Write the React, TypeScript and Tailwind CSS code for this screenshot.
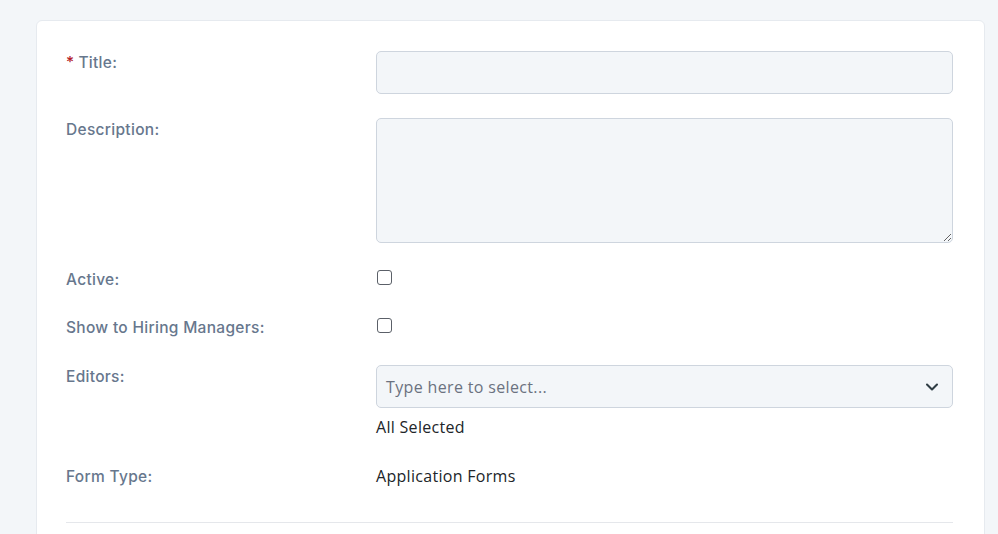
import { ChevronDown } from "lucide-react";

const font = { fontFamily: '"Open Sans", "Liberation Sans", sans-serif' };
const labelFont = { fontFamily: 'Inter, "Open Sans", sans-serif' };

function Label({ children, required }: { children: React.ReactNode; required?: boolean }) {
  return (
    <div className="w-[310px] shrink-0 pt-[1px] text-[15.5px] leading-[21px] font-medium tracking-[0.3px] text-[#67778d]" style={labelFont}>
      {required && <span className="text-[#b4232b] mr-1">*</span>}
      {children}
    </div>
  );
}

function Checkbox() {
  return <div className="ml-[1px] mt-[2px] w-[15px] h-[15px] rounded-[3px] border-[1.5px] border-[#5b6068] bg-white" />;
}

export default function App() {
  return (
    <div className="min-h-screen bg-[#f3f6f9] pt-5 pl-9 pr-[13px]" style={font}>
      <div className="bg-white border border-[#e6eaef] rounded-t-md pt-[30px] pl-[29px] pr-[31px] pb-10 min-h-[600px]">
        {/* Title */}
        <div className="flex mb-6">
          <Label required>Title:</Label>
          <input className="flex-1 h-[43px] bg-[#f3f6f9] border border-[#ced5de] rounded-[5px] px-3 outline-none" />
        </div>

        {/* Description */}
        <div className="flex mb-[25px]">
          <Label>Description:</Label>
          <textarea className="flex-1 h-[125px] bg-[#f3f6f9] border border-[#ced5de] rounded-[5px] px-3 py-2 outline-none" />
        </div>

        {/* Active */}
        <div className="flex mb-[26px]">
          <Label>Active:</Label>
          <Checkbox />
        </div>

        {/* Show to hiring managers */}
        <div className="flex mb-[27px]">
          <Label>Show to Hiring Managers:</Label>
          <Checkbox />
        </div>

        {/* Editors */}
        <div className="flex mb-7">
          <Label>Editors:</Label>
          <div className="flex-1">
            <div className="h-[43px] bg-[#f3f6f9] border border-[#ced5de] rounded-[5px] pl-[9px] pr-[10px] flex items-center justify-between">
              <span className="text-[16px] tracking-[0.35px] text-[#6b7280]">Type here to select...</span>
              <ChevronDown className="w-5 h-5 text-[#2f3d44]" strokeWidth={2.5} />
            </div>
            <div className="mt-[9px] text-[16px] leading-5 tracking-[0.3px] text-[#212529]">All Selected</div>
          </div>
        </div>

        {/* Form type */}
        <div className="flex mb-[35px]">
          <Label>Form Type:</Label>
          <div className="flex-1 text-[16px] leading-[22px] tracking-[0.3px] text-[#212529]">Application Forms</div>
        </div>

        <div className="border-t border-[#e5e7eb]" />
      </div>
    </div>
  );
}
